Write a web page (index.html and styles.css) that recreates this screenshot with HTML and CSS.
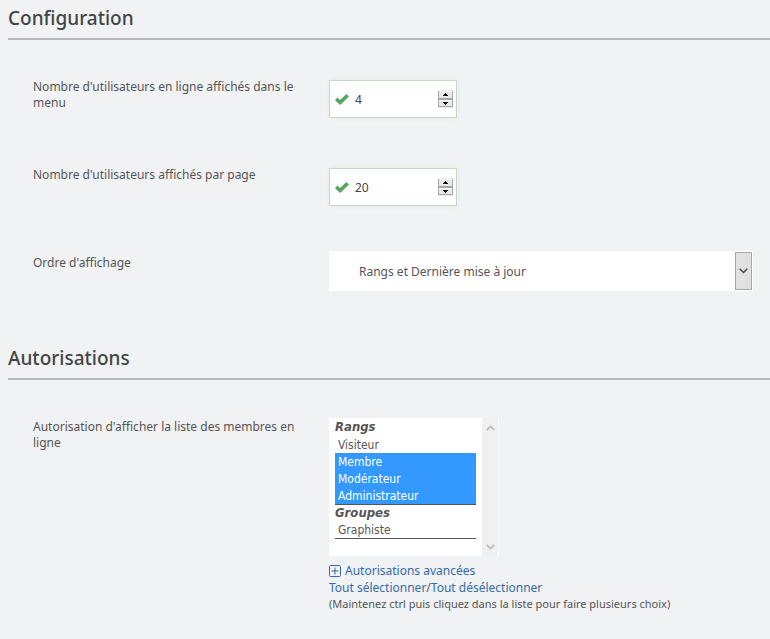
FILE: index.html
```html
<!DOCTYPE html>
<html lang="fr">
<head>
<meta charset="utf-8">
<title>Configuration</title>
<link rel="stylesheet" href="styles.css">
</head>
<body>
<form class="page">
  <section class="section">
    <h2 class="title">Configuration</h2>
    <div class="fields">
      <div class="field">
        <label class="label" for="online">Nombre d'utilisateurs en ligne affichés dans le menu</label>
        <div class="number">
          <svg class="check" viewBox="0 0 14 11" aria-hidden="true"><path d="M0 6.2 2.4 3.5 5.2 6.1 11.3 0 14 2.6 5.2 11Z"/></svg>
          <input class="number-input" id="online" type="number" value="4">
          <svg class="spinner" viewBox="0 0 15 18" aria-hidden="true"><use href="#spin"/></svg>
        </div>
      </div>
      <div class="field">
        <label class="label" for="perpage">Nombre d'utilisateurs affichés par page</label>
        <div class="number">
          <svg class="check" viewBox="0 0 14 11" aria-hidden="true"><path d="M0 6.2 2.4 3.5 5.2 6.1 11.3 0 14 2.6 5.2 11Z"/></svg>
          <input class="number-input" id="perpage" type="number" value="20">
          <svg class="spinner" viewBox="0 0 15 18" aria-hidden="true">
            <g id="spin">
              <path fill="#e9e9e9" d="M0 0h15v18H0z"/>
              <path fill="#a6a6a6" d="M0 1h1v16H0zM14 1h1v16h-1zM0 8h15v2H0zM0 16h15v1H0z"/>
              <path fill="#fff" d="M1 1h13v1H1zM1 10h13v1H1z"/>
              <path fill="#111" d="M7 3h1v1h1v1h1v1H5V5h1V4h1zM5 12h5v1H9v1H8v1H7v-1H6v-1H5z"/>
            </g>
          </svg>
        </div>
      </div>
      <div class="field">
        <label class="label" for="order">Ordre d'affichage</label>
        <div class="dropdown">
          <select class="dropdown-select" id="order"><option>Rangs et Dernière mise à jour</option></select>
          <span class="dropdown-arrow"><svg viewBox="0 0 9 6" width="9" height="6" aria-hidden="true"><path d="M.7.8 4.5 4.6 8.3.8"/></svg></span>
        </div>
      </div>
    </div>
  </section>
  <section class="section">
    <h2 class="title">Autorisations</h2>
    <div class="fields">
      <div class="field">
        <label class="label" for="auth">Autorisation d'afficher la liste des membres en ligne</label>
        <div class="auth">
          <div class="listbox">
            <select class="list" id="auth" multiple size="8">
              <optgroup label="Rangs">
                <option>Visiteur</option>
                <option selected>Membre</option>
                <option selected>Modérateur</option>
                <option selected>Administrateur</option>
              </optgroup>
              <optgroup label="Groupes">
                <option>Graphiste</option>
              </optgroup>
            </select>
            <div class="scrollbar" aria-hidden="true">
              <svg viewBox="0 0 9 6" width="9" height="6"><path d="M.7 5.2 4.5 1.4 8.3 5.2"/></svg>
              <svg viewBox="0 0 9 6" width="9" height="6"><path d="M.7.8 4.5 4.6 8.3.8"/></svg>
            </div>
          </div>
          <a class="link advanced" href="#"><svg class="plus" viewBox="0 0 12 12" aria-hidden="true"><rect x=".5" y=".5" width="11" height="11" rx="1"/><path d="M6 2.5v7M2.5 6h7"/></svg>Autorisations avancées</a>
          <div class="links"><a class="link" href="#">Tout sélectionner</a>/<a class="link" href="#">Tout désélectionner</a></div>
          <small class="hint">(Maintenez ctrl puis cliquez dans la liste pour faire plusieurs choix)</small>
        </div>
      </div>
    </div>
  </section>
</form>
</body>
</html>
```
FILE: styles.css
```css
* { box-sizing: border-box; }

body {
  margin: 0;
  background: #f0f2f4;
  color: #555;
  font: 12px/16px "Noto Sans", sans-serif;
}

.page { padding: 5px 0 24px 8px; }

.section { margin-bottom: 51px; }
.section:last-child { margin-bottom: 0; }

.title {
  margin: 0;
  padding-bottom: 7px;
  border-bottom: 2px solid #b6b8bb;
  color: #444;
  font-size: 19px;
  font-weight: 500;
  line-height: 26px;
}

.fields {
  display: grid;
  gap: 48px;
  padding: 38px 17px 0 25px;
}

.field {
  display: grid;
  grid-template-columns: 284px 1fr;
  column-gap: 12px;
  align-items: start;
  min-height: 40px;
}

.label { padding-top: 1px; }

.number {
  display: flex;
  align-items: center;
  width: 128px;
  height: 38px;
  margin-top: 2px;
  padding: 0 3px 0 5px;
  border: 1px solid #c5dac5;
  background: #fff;
  box-shadow: 0 0 6px rgba(0, 0, 0, .04);
}

.check {
  flex: none;
  width: 14px;
  height: 11px;
  fill: #54a75b;
}

.number-input {
  flex: 1;
  min-width: 0;
  padding: 2px 0 0 6px;
  border: 0;
  background: none;
  color: #444;
  font: inherit;
  appearance: textfield;
}

.spinner {
  flex: none;
  width: 15px;
  height: 18px;
}

.dropdown {
  display: flex;
  height: 40px;
  margin-top: -3px;
  padding: 1px;
  background: #fff;
}

.dropdown-select {
  flex: 1;
  min-width: 0;
  padding: 2px 29px 0;
  border: 0;
  background: none;
  color: #555;
  font: inherit;
  appearance: none;
}

.dropdown-arrow {
  display: grid;
  place-items: center;
  width: 17px;
  border: 1px solid #a6a6a6;
  background: #e1e1e1;
}

.dropdown-arrow path {
  fill: none;
  stroke: #444;
  stroke-width: 1.4;
}

.auth {
  display: flex;
  flex-direction: column;
  align-items: flex-start;
  line-height: 17px;
}

.listbox {
  display: flex;
  width: 170px;
  height: 138px;
  margin-bottom: 6px;
  padding-right: 1px;
  background: #fff;
}

.list {
  flex: 1;
  min-width: 0;
  padding: 1px 6px 0;
  border: 0;
  outline: 0;
  background: #fff;
  color: #555;
  font: 13px/17px "DejaVu Sans Condensed", "Noto Sans", sans-serif;
  scrollbar-width: none;
}

.list optgroup {
  border-bottom: 1px solid #555;
  font-style: italic;
  line-height: 16px;
  text-indent: -2px;
}

.list option {
  height: 17px;
  min-height: 0;
  padding: 2px 3px 0;
  font-size: 12px;
  font-style: normal;
  line-height: 15px;
  text-indent: 0;
}

.list option:checked {
  background-image: linear-gradient(#39f, #39f);
  -webkit-text-fill-color: #fff;
}

.scrollbar {
  display: flex;
  flex-direction: column;
  align-items: center;
  justify-content: space-between;
  width: 16px;
  padding: 7px 0 6px;
  background: #f0f0f0;
}

.scrollbar path {
  fill: none;
  stroke: #bbb;
  stroke-width: 1.8;
}

.link {
  color: #366ba8;
  text-decoration: none;
}

.advanced {
  display: flex;
  align-items: center;
  gap: 4px;
}

.plus {
  width: 12px;
  height: 12px;
  fill: none;
  stroke: #366ba8;
}

.hint {
  font-size: 11px;
  line-height: 16px;
}
```
